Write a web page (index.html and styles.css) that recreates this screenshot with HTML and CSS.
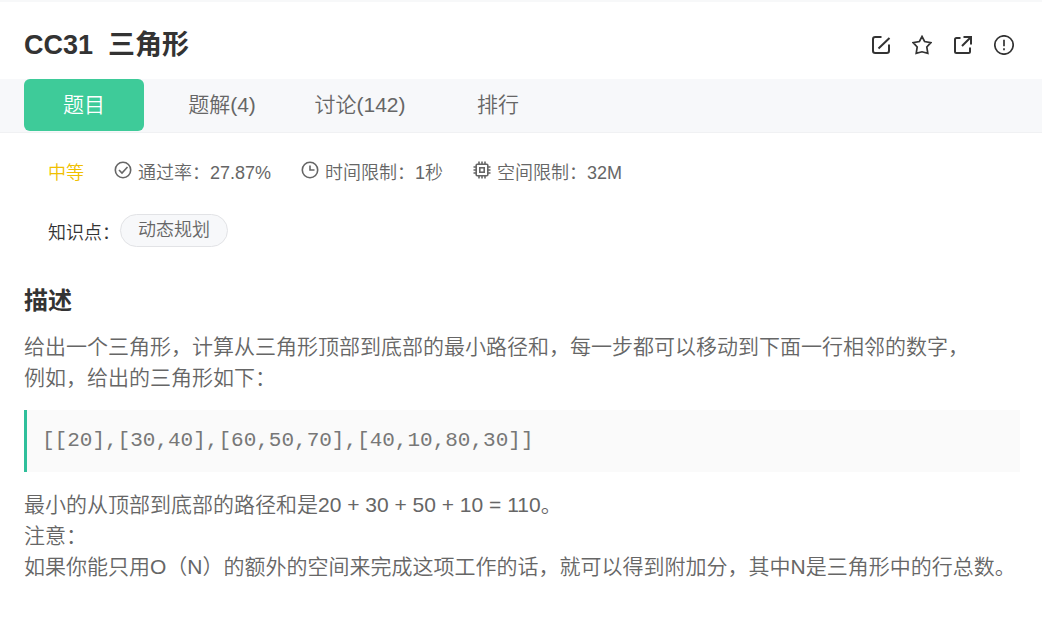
FILE: index.html
```html
<!DOCTYPE html>
<html lang="zh-CN">
<head>
    <meta charset="UTF-8">
    <meta name="viewport" content="width=device-width, initial-scale=1.0">
    <title>CC31 三角形</title>
    <link rel="stylesheet" href="styles.css">
</head>
<body>
    <div class="header">
        <h1>CC31&nbsp; 三角形</h1>
        <div class="actions">
            <svg class="icon" viewBox="0 0 20 20"><path d="M10.500 2H4.200Q2 2 2 4.200v11.600Q2 18 4.200 18h11.600q2.200 0 2.200-2.200V9.500M7.500 13.500 18.500 3"/></svg>
            <svg class="icon" viewBox="0 0 20 20"><path class="thin" d="m10 1.500 2.600 5 6.200 1.200-4 4.300 1 6.400L10 16.800l-5.800 1.600 1-6.400-4-4.300 6.200-1.200z"/></svg>
            <svg class="icon" viewBox="0 0 20 20"><path d="M7.500 3H3.500Q2 3 2 4.500v12Q2 18 3.500 18h12q1.500 0 1.500-1.500v-4M10.500 2H18v7.500M18 2 9 11"/></svg>
            <svg class="icon" viewBox="0 0 20 20"><circle class="thin" cx="10" cy="10" r="9.200"/><path class="thin" d="M10 4.800v6.400M10 13.200v2"/></svg>
        </div>
    </div>

    <div class="tabs">
        <a class="tab active">题目</a>
        <a class="tab">题解(4)</a>
        <a class="tab">讨论(142)</a>
        <a class="tab">排行</a>
    </div>

    <div class="info">
        <span class="level">中等</span>
        <span class="item">
            <svg class="info-icon" viewBox="0 0 18 18"><circle cx="9" cy="9" r="7.700"/><path d="m5 9 3 3 5.500-6"/></svg>
            通过率：27.87%
        </span>
        <span class="item">
            <svg class="info-icon" viewBox="0 0 18 18"><circle cx="9" cy="9" r="7.700"/><path d="M9 4.500V9h4.500"/></svg>
            时间限制：1秒
        </span>
        <span class="item">
            <svg class="info-icon" viewBox="0 0 18 18"><rect x="3.200" y="3.200" width="11.600" height="11.600" rx="1"/><rect x="6.800" y="6.800" width="4.400" height="4.400"/><path d="M6 .5v2.500M9 .5v2.500M12 .5v2.500M6 15v2.500M9 15v2.500M12 15v2.500M.5 6H3M.5 9H3M.5 12H3M15 6h2.500M15 9h2.500M15 12h2.500"/></svg>
            空间限制：32M
        </span>
    </div>

    <div class="knowledge">
        <span class="label">知识点：</span>
        <a class="tag">动态规划</a>
    </div>

    <div class="content">
        <h3>描述</h3>
        <p>给出一个三角形，计算从三角形顶部到底部的最小路径和，每一步都可以移动到下面一行相邻的数字，<br>例如，给出的三角形如下：</p>
        <pre>[[20],[30,40],[60,50,70],[40,10,80,30]]</pre>
        <p>最小的从顶部到底部的路径和是20 + 30 + 50 + 10 = 110。<br>注意：<br>如果你能只用O（N）的额外的空间来完成这项工作的话，就可以得到附加分，其中N是三角形中的行总数。</p>
    </div>
</body>
</html>
```
FILE: styles.css
```css
body {
    margin: 0;
    border-top: 2px solid #f7f8f9;
    background-color: #fff;
    color: #666;
    font-family: "Liberation Sans", "Noto Sans CJK SC", sans-serif;
    font-weight: 350;
    overflow: hidden;
}
h1, h3, p, pre {
    margin: 0;
}
.header {
    display: flex;
    justify-content: space-between;
    align-items: center;
    height: 77px;
    padding: 9px 28px 0 24px;
    box-sizing: border-box;
}
h1 {
    color: #333;
    font-size: 27px;
    line-height: 40px;
}
.actions {
    display: flex;
    gap: 21px;
}
.icon {
    width: 20px;
    height: 20px;
    fill: none;
    stroke: #333;
    stroke-width: 2;
}
.icon .thin {
    stroke-width: 1.7;
}
.tabs {
    display: flex;
    height: 53px;
    padding: 0 24px;
    border-bottom: 1px solid #f0f1f3;
    background-color: #f7f8fa;
}
.tab {
    width: 120px;
    height: 52px;
    margin-right: 18px;
    border-radius: 6px;
    font-size: 21px;
    line-height: 52px;
    text-align: center;
}
.tab.active {
    background-color: #3ecb99;
    color: #fff;
}
.info {
    display: flex;
    gap: 30px;
    margin-top: 27px;
    padding-left: 48px;
    font-size: 18px;
    line-height: 27px;
}
.level {
    color: #f0c000;
}
.item {
    display: flex;
}
.info-icon {
    width: 18px;
    height: 18px;
    margin: 1px 6px 0 0;
    fill: none;
    stroke: #666;
    stroke-width: 1.6;
}
.knowledge {
    display: flex;
    margin-top: 27px;
    padding-left: 48px;
    font-size: 18px;
}
.label {
    width: 72px;
    padding-top: 6px;
    color: #333;
    line-height: 27px;
}
.tag {
    padding: 0 17px;
    height: 31px;
    border: 1px solid #e2e3e6;
    border-radius: 17px;
    background-color: #f7f8fa;
    line-height: 31px;
}
.content {
    padding: 36px 22px 0 24px;
    font-size: 21px;
    line-height: 31px;
    white-space: nowrap;
}
h3 {
    margin-bottom: 12px;
    color: #333;
    font-size: 24px;
    line-height: 36px;
}
pre {
    margin: 17px 0;
    padding: 15px 15px 16px;
    border-left: 3px solid #2fbf9b;
    background-color: #fafafa;
    color: #777;
    font-family: "Liberation Mono", monospace;
    font-size: 21px;
    line-height: 31px;
}
```
